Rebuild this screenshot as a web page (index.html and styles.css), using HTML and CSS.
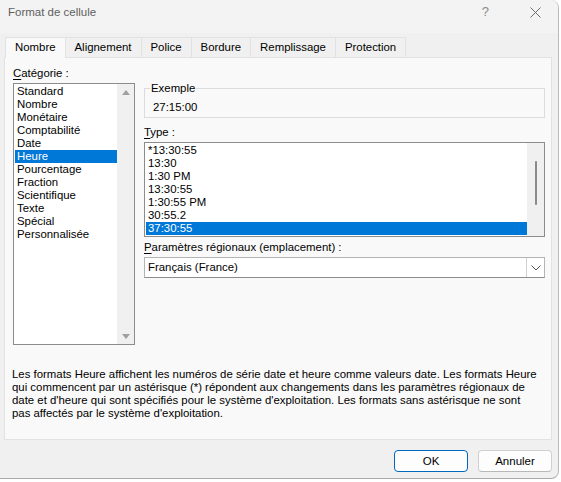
FILE: index.html
```html
<!DOCTYPE html>
<html>
<head>
  <link rel="stylesheet" href="styles.css">
</head>
<body>

  <div class="dialog">
    <div class="titlebar">
      <span class="title">Format de cellule</span>
      <span class="help">?</span>
      <span class="close">
        <svg width="11" height="11" viewBox="0 0 11 11"><path d="M0.5 0.5 L10.5 10.5 M10.5 0.5 L0.5 10.5" stroke="#6b6b6b" stroke-width="1" fill="none"/></svg>
      </span>
    </div>

    <div class="tabs">
      <div class="tab active">Nombre</div>
      <div class="tab">Alignement</div>
      <div class="tab">Police</div>
      <div class="tab">Bordure</div>
      <div class="tab">Remplissage</div>
      <div class="tab">Protection</div>
    </div>

    <div class="panel">
      <div class="columns">
        <div class="left-col">
          <div class="field-label"><u>C</u>atégorie :</div>
          <div class="listbox category-list">
            <ul class="items">
              <li>Standard</li>
              <li>Nombre</li>
              <li>Monétaire</li>
              <li>Comptabilité</li>
              <li>Date</li>
              <li class="selected">Heure</li>
              <li>Pourcentage</li>
              <li>Fraction</li>
              <li>Scientifique</li>
              <li>Texte</li>
              <li>Spécial</li>
              <li>Personnalisée</li>
            </ul>
            <div class="scrollbar arrows">
              <span class="arrow-up"></span>
              <span class="arrow-down"></span>
            </div>
          </div>
        </div>

        <div class="right-col">
          <fieldset class="sample">
            <legend>Exemple</legend>
            <div class="sample-value">27:15:00</div>
          </fieldset>

          <div class="field-label type-label"><u>T</u>ype :</div>
          <div class="listbox type-list">
            <ul class="items">
              <li>*13:30:55</li>
              <li>13:30</li>
              <li>1:30 PM</li>
              <li>13:30:55</li>
              <li>1:30:55 PM</li>
              <li>30:55.2</li>
              <li class="selected">37:30:55</li>
            </ul>
            <div class="scrollbar">
              <span class="thumb"></span>
            </div>
          </div>

          <div class="field-label locale-label"><u>P</u>aramètres régionaux (emplacement) :</div>
          <div class="combo">
            <span class="combo-value">Français (France)</span>
            <span class="combo-button">
              <svg width="10" height="6" viewBox="0 0 10 6"><path d="M0.5 0.5 L5 5 L9.5 0.5" stroke="#555" stroke-width="1" fill="none"/></svg>
            </span>
          </div>
        </div>
      </div>

      <p class="description">
        Les formats Heure affichent les numéros de série date et heure comme valeurs date. Les formats Heure<br>
        qui commencent par un astérisque (*) répondent aux changements dans les paramètres régionaux de<br>
        date et d'heure qui sont spécifiés pour le système d'exploitation. Les formats sans astérisque ne sont<br>
        pas affectés par le système d'exploitation.
      </p>
    </div>

    <div class="buttons">
      <button class="btn default">OK</button>
      <button class="btn">Annuler</button>
    </div>
  </div>

</body>
</html>
```

FILE: styles.css
```css
body {
  margin: 0;
  background: #fff;
  font-family: "Liberation Sans", Arial, sans-serif;
  font-size: 11.4px;
  color: #000;
}

.dialog {
  width: 559px;
  height: 479px;
  background: #f0f0f0;
  border-right: 1px solid #b9b9b9;
  border-bottom: 1px solid #a9a9a9;
  border-radius: 0 8px 8px 0;
  box-sizing: border-box;
}

.titlebar {
  height: 33px;
  display: flex;
  align-items: flex-start;
  background: #f3f3f3;
  border-radius: 0 8px 0 0;
}

.title {
  margin: 4px 0 0 8px;
  color: #5f5f5f;
  font-size: 11.5px;
  line-height: 16px;
}

.help {
  margin: 4px 0 0 auto;
  color: #8a8a8a;
  font-size: 13px;
  line-height: 16px;
}

.close {
  margin: 7px 17px 0 41px;
  line-height: 0;
}

.tabs {
  display: flex;
  margin: 4px 0 0 5px;
  height: 20px;
}

.tab {
  height: 20px;
  box-sizing: border-box;
  padding: 0 9px;
  line-height: 19px;
  border: 1px solid #e2e2e2;
  border-bottom: none;
  border-left: none;
  background: #f0f0f0;
  text-align: center;
}

.tab:first-child {
  border-left: 1px solid #e2e2e2;
}

.tab.active {
  background: #f9f9f9;
  height: 21px;
  position: relative;
  z-index: 1;
}

.panel {
  margin-left: 4px;
  width: 548px;
  height: 383px;
  box-sizing: border-box;
  background: #f9f9f9;
  border: 1px solid #e2e2e2;
  padding: 7px 6px 0 8px;
}

.columns {
  display: flex;
  gap: 9px;
}

.left-col {
  width: 122px;
}

.right-col {
  width: 401px;
}

.field-label {
  line-height: 16px;
  height: 16px;
  margin-bottom: 2px;
  white-space: nowrap;
}

.field-label u {
  text-decoration-thickness: 1px;
  text-underline-offset: 2px;
}

.listbox {
  display: flex;
  background: #fff;
  border: 1px solid #8c8c8c;
  box-sizing: border-box;
}

.category-list {
  height: 262px;
}

.type-list {
  height: 95px;
}

.items {
  list-style: none;
  margin: 0;
  padding: 1px 0 0 1px;
  flex: 1;
}

.items li {
  line-height: 13px;
  height: 13px;
  padding-left: 2px;
  white-space: nowrap;
}

.items li.selected {
  background: #0078d7;
  color: #fff;
}

.scrollbar {
  width: 17px;
  background: #f0f0f0;
  display: flex;
  flex-direction: column;
  align-items: center;
}

.arrows {
  justify-content: space-between;
  padding: 6px 0 5px;
  box-sizing: border-box;
}

.arrow-up,
.arrow-down {
  width: 0;
  height: 0;
  border-left: 4px solid transparent;
  border-right: 4px solid transparent;
}

.arrow-up {
  border-bottom: 5px solid #a0a0a0;
}

.arrow-down {
  border-top: 5px solid #a0a0a0;
}

.thumb {
  width: 2px;
  height: 44px;
  margin-top: 18px;
  background: #8a8a8a;
  border-radius: 1px;
}

.sample {
  margin: 15px 0 0;
  padding: 3px 8px 2px;
  border: 1px solid #dcdcdc;
  min-width: 0;
}

.sample legend {
  padding: 0 1px;
  margin-left: -3px;
  line-height: 16px;
}

.sample-value {
  line-height: 16px;
}

.type-label {
  margin-top: 6px;
}

.locale-label {
  margin-top: 2px;
}

.combo {
  display: flex;
  height: 21px;
  box-sizing: border-box;
  background: #fff;
  border: 1px solid #b4b4b4;
  border-bottom-color: #8c8c8c;
}

.combo-value {
  flex: 1;
  padding-left: 3px;
  line-height: 19px;
}

.combo-button {
  width: 17px;
  display: flex;
  align-items: center;
  justify-content: center;
  border-left: 1px solid #d0d0d0;
}

.description {
  margin: 23px 0 0 -1px;
  line-height: 13px;
  white-space: nowrap;
}

.buttons {
  display: flex;
  justify-content: flex-end;
  gap: 10px;
  margin: 10px 6px 0 0;
}

.btn {
  font-family: inherit;
  font-size: 11.5px;
  height: 22px;
  width: 74px;
  padding: 0;
  background: #fdfdfd;
  border: 1px solid #d0d0d0;
  border-bottom-color: #b8b8b8;
  border-radius: 4px;
  color: #000;
}

.btn.default {
  border: 1px solid #0067c0;
  box-shadow: inset 0 0 0 1px #fff;
}
```
